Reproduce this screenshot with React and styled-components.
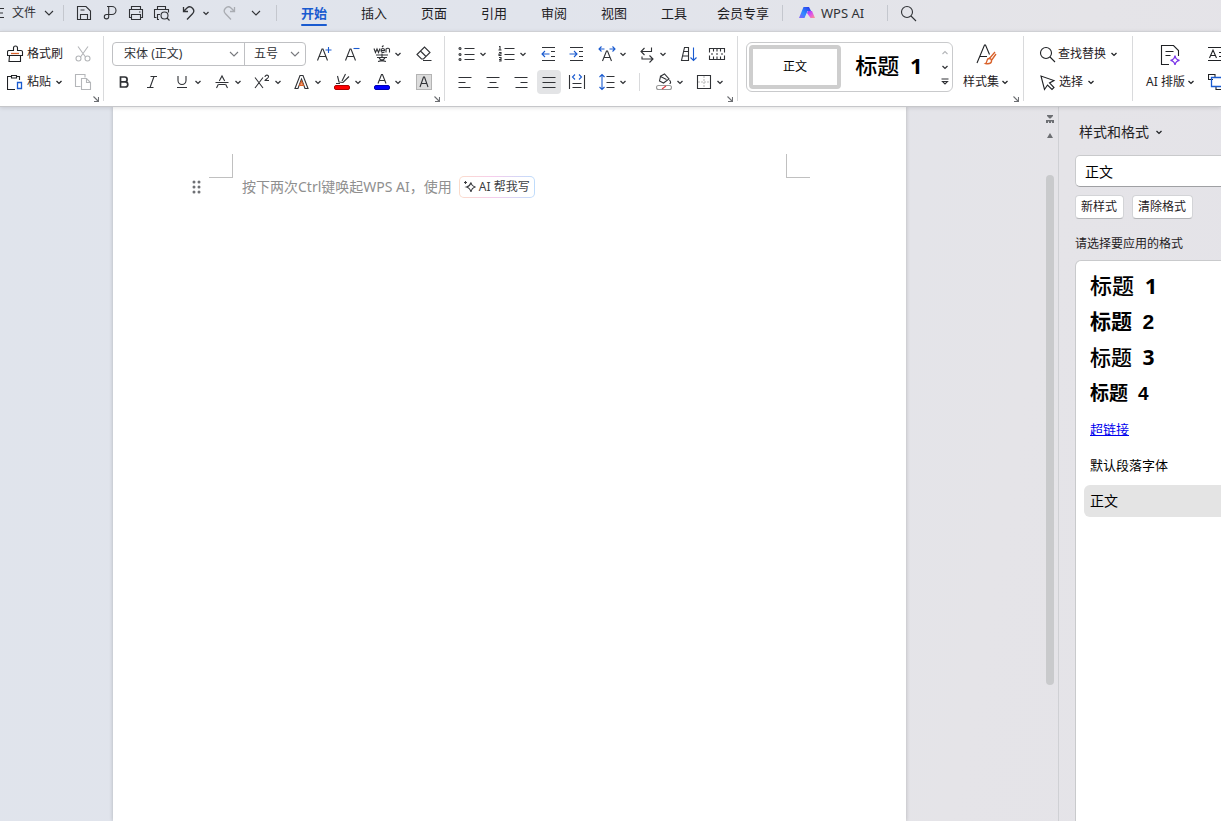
import React, { useState } from 'react';
import styled, { createGlobalStyle, css } from 'styled-components';

const ink = '#303236';
const blue = '#1a5bd0';
const line = '#c9cacc';
const uiFont = '"Noto Sans", "Noto Sans CJK SC", sans-serif';

const GlobalStyle = createGlobalStyle`
    * {
        box-sizing: border-box;
    }

    body {
        margin: 0;
        font-family: ${uiFont};
        font-size: 12px;
        line-height: 20px;
        color: #1f2124;
        overflow: hidden;
    }

    button, select, input {
        font: inherit;
        color: inherit;
        margin: 0;
        padding: 0;
        border: none;
        border-radius: 0;
        background: none;
    }

    svg {
        display: block;
        flex: none;
        fill: none;
        stroke: currentColor;
        stroke-width: 1.1;
    }
`;

const Window = styled.div`
    display: flex;
    flex-direction: column;
    height: 100vh;
    overflow: hidden;
    background: linear-gradient(100deg, #e0e4ec, #e1e4ec 40%, #e5e4e8 80%, #e4e3e8);
`;

/* ---- top bar ---- */

const TopBar = styled.header`
    display: flex;
    align-items: center;
    flex: none;
    padding-bottom: 5px;
    color: ${ink};
    white-space: nowrap;
`;

const FileButton = styled.button`
    display: flex;
    align-items: center;
    gap: 8px;
    height: 26px;
    margin-right: 2px;
`;

const QuickButton = styled.button`
    display: flex;
    align-items: center;
    justify-content: center;
    width: ${({ $narrow }) => $narrow ? '10px' : '26px'};
    margin-right: ${({ $narrow }) => $narrow ? '6px' : '0'};
    height: 26px;
    color: ${({ $muted }) => $muted ? '#a9acb2' : ink};
`;

const Divider = styled.span`
    flex: none;
    width: 1px;
    height: 16px;
    margin: ${({ $afterTabs }) => $afterTabs ? '0 16px 0 0' : '0 7px'};
    background: #c4c7ce;
`;

const Tab = styled.button`
    position: relative;
    min-width: 60px;
    height: 26px;
    padding: 0 13px;
    font-size: 13px;
    color: #1f2124;

    ${({ $active }) => $active && css`
        font-weight: 700;
        color: ${blue};

        &:after {
            content: '';
            position: absolute;
            left: 17px;
            right: 17px;
            bottom: 0;
            height: 2px;
            border-radius: 1px;
            background: ${blue};
        }
    `}
`;

const AiTab = styled.button`
    display: flex;
    align-items: center;
    gap: 6px;
    height: 26px;
    margin-right: 16px;
    font-size: 13px;
`;

/* ---- ribbon ---- */

const Ribbon = styled.section`
    display: flex;
    flex: none;
    height: 76px;
    padding: 4px 0 5px;
    overflow: hidden;
    background: #fff;
    border-top: 1px solid #cfd0d4;
    border-bottom: 1px solid #c6c7ca;
    white-space: nowrap;
    color: ${ink};
    position: relative;
    box-shadow: 0 1px 4px rgba(0, 0, 0, .12);
`;

const Group = styled.div`
    position: relative;
    display: flex;
    flex: none;
    padding: ${({ $pad }) => $pad || '4px 8px 0'};
    border-right: 1px solid #d9dadc;
`;

const Rows = styled.div`
    display: flex;
    flex-direction: column;
`;

const Row = styled.div`
    display: flex;
    align-items: center;
    justify-content: ${({ $spread }) => $spread ? 'space-between' : 'flex-start'};
    gap: ${({ $gap }) => $gap || '4px'};
    height: 28px;
`;

const Tool = styled.button`
    display: flex;
    align-items: center;
    justify-content: center;
    width: 24px;
    height: 24px;
    border-radius: 4px;
    background: ${({ $pressed }) => $pressed ? '#e3e4e6' : 'none'};
    color: ${({ $muted }) => $muted ? '#b4b6b9' : ink};
`;

const Split = styled.div`
    display: flex;
    align-items: center;
    padding: 0 2px;

    & + ${Tool} {
        margin-left: 4px;
    }
`;

const CaretButton = styled.button`
    display: flex;
    align-items: center;
    justify-content: center;
    width: 8px;
    height: 24px;
`;

const LabelButton = styled.button`
    display: flex;
    align-items: center;
    gap: 2px;
    height: 24px;
    color: #1f2124;

    svg + svg {
        margin-left: 3px;
    }
`;

const Launcher = styled.button`
    position: absolute;
    right: 4px;
    bottom: -1px;
    color: #6d6f73;
`;

const RowDivider = styled.span`
    width: 1px;
    height: 18px;
    margin: 0 6px;
    background: #d9dadc;
`;

const ComboGroup = styled.div`
    display: flex;
    height: 24px;
    margin-right: 2px;
    border: 1px solid #bfc0c3;
    border-radius: 4px;
`;

const ComboCell = styled.label`
    display: grid;
    align-items: center;
    width: ${({ $wide }) => $wide ? '131px' : '61px'};

    & + & {
        border-left: 1px solid #bfc0c3;
    }

    > * {
        grid-area: 1 / 1;
    }

    select {
        appearance: none;
        width: 100%;
        height: 22px;
        padding-left: ${({ $wide }) => $wide ? '11px' : '9px'};
        outline: none;
    }

    svg {
        justify-self: end;
        margin-right: 5px;
        color: #77797d;
        pointer-events: none;
    }
`;

const Gallery = styled.div`
    display: flex;
    gap: 2px;
    height: 50px;
    margin-top: 2px;
    padding: 2px 0 2px 2px;
    border: 1px solid ${line};
    border-radius: 6px;
`;

const Preview = styled.button`
    width: 92px;
    height: 44px;
    border: 4px solid ${({ $active }) => $active ? '#cecece' : 'transparent'};
    border-radius: 4px;
    color: #000;
    white-space: pre;
`;

const Spinner = styled.div`
    display: flex;
    flex-direction: column;
    width: 15px;

    button {
        display: flex;
        flex: 1;
        align-items: center;
        justify-content: center;
    }

    button:first-child {
        color: #b4b6b9;
    }
`;

const BigButton = styled.button`
    display: flex;
    flex-direction: column;
    align-items: center;
    margin-left: ${({ $offset }) => $offset || '0'};
    color: #1f2124;

    > span {
        display: flex;
        align-items: center;
        justify-content: center;
        gap: 3px;
        height: 28px;
    }
`;

/* ---- document ---- */

const Workspace = styled.div`
    display: flex;
    flex: 1;
    min-height: 0;
`;

const Canvas = styled.main`
    display: flex;
    flex: 1;
    min-width: 0;
    padding: 0 139px 0 113px;
`;

const Page = styled.article`
    flex: 1;
    min-width: 0;
    padding-top: 47px;
    background: #fff;
    box-shadow: 0 0 4px rgba(0, 0, 0, .22);
`;

const Corners = styled.div`
    display: flex;
    justify-content: space-between;
    padding: 0 96px;
`;

const Corner = styled.span`
    width: 24px;
    height: 24px;
    border-bottom: 1px solid #c0c0c0;
    border-${({ $side }) => $side}: 1px solid #c0c0c0;
`;

const PromptLine = styled.div`
    display: flex;
    align-items: center;
    height: 22px;
    margin-top: -2px;
    padding-left: 79px;
    white-space: nowrap;
`;

const DragHandle = styled.button`
    margin-right: 41px;
    color: #6f7175;
`;

const Hint = styled.p`
    margin: 0 7px 0 0;
    font-size: 14px;
    color: #8f8f8f;
`;

const WriteButton = styled.button`
    display: flex;
    align-items: center;
    gap: 2px;
    height: 22px;
    padding: 0 4px 0 3px;
    border: 1px solid transparent;
    border-radius: 5px;
    background:
        linear-gradient(#fff, #fff) padding-box,
        linear-gradient(90deg, #fbdccb, #f6cdec 45%, #bfdcfb) border-box;
    color: #3c3e42;
`;

const ScrollRail = styled.div`
    display: flex;
    flex-direction: column;
    align-items: center;
    flex: none;
    width: 13px;
    padding: 8px 4px 0 1px;
    color: #6d6f73;

    svg + svg {
        margin: 10px 0 37px;
    }
`;

const Track = styled.div`
    flex: 1;
    width: 8px;
`;

const Thumb = styled.div`
    height: 79%;
    border-radius: 4px;
    background: #c9cacc;
`;

/* ---- styles pane ---- */

const Pane = styled.aside`
    display: flex;
    flex: 0 0 163px;
    flex-direction: column;
    padding: 15px 0 0 16px;
    border-left: 1px solid #cfd0d4;
    overflow: hidden;
    white-space: nowrap;
`;

const PaneTitle = styled.button`
    display: flex;
    align-items: center;
    gap: 7px;
    height: 20px;
    padding-left: 4px;
    font-size: 14px;
`;

const CurrentStyle = styled.input`
    flex: none;
    width: 280px;
    height: 32px;
    margin-top: 13px;
    padding: 0 9px;
    border: 1px solid ${line};
    border-bottom-color: #9fa0a3;
    border-radius: 5px;
    background: #fff;
    font-size: 14px;
    color: #000;
`;

const PaneButtons = styled.div`
    display: flex;
    gap: 8px;
    margin-top: 8px;
`;

const PaneButton = styled.button`
    height: 24px;
    padding: 0 6px 0 5px;
    border: 1px solid #d3d4d7;
    border-bottom-color: #b4b5b8;
    border-radius: 4px;
    background: #fff;
`;

const PaneLabel = styled.p`
    margin: 15px 0 6px;
    line-height: 20px;
`;

const StyleList = styled.div`
    display: flex;
    flex: 1;
    flex-direction: column;
    gap: 4px;
    width: 280px;
    padding: 8px;
    border: 1px solid ${line};
    border-bottom: none;
    border-radius: 6px 6px 0 0;
    background: #fff;
`;

const StyleItem = styled.button`
    height: 32px;
    padding: 0 6px;
    border-radius: 6px;
    background: ${({ $active }) => $active ? '#e4e4e4' : 'none'};
    font-size: ${({ $size }) => $size};
    font-weight: ${({ $weight }) => $weight || 400};
    color: ${({ $link }) => $link ? '#0000ee' : '#000'};
    text-decoration: ${({ $link }) => $link ? 'underline' : 'none'};
    text-align: left;
    white-space: pre;
`;

const Level = styled.span`
    margin-left: 5px;
    font-family: ${({ $sans }) => $sans ? '"Liberation Sans"' : '"Open Sans"'}, sans-serif;
    font-weight: 700;
`;

const HeadingSample = styled.span`
    font-size: 22px;
    font-weight: 500;
`;

const Svg = ({ w = 18, h = 18, children }) => (
    <svg width={w} height={h} viewBox={`0 0 ${w} ${h}`} aria-hidden='true'>{children}</svg>
);

const Caret = () => <Svg w={6} h={5}><path d='M.5 1L3 3.4 5.5 1' strokeWidth='1.3' /></Svg>;
const Chevron = () => <Svg w={10} h={6}><path d='M1 1l4 4 4-4' /></Svg>;
const LaunchIcon = () => <Svg w={6} h={6}><path d='M.5.5L5 5M5.5 1v4.5H1' /></Svg>;

const icons = {
    menu: <Svg w={4} h={12}><path d='M0 1.5h4M0 6h3M0 10.5h4' /></Svg>,
    save: <Svg><path d='M2.5 2.5H11l4.5 4.5v8.5h-13zM5.5 15.5v-5h7v5M5.5 6h4' /></Svg>,
    pdf: <Svg><path d='M6 2.5h5a4 4 0 010 8H5.5a2.2 2.2 0 102.2 2.3V2.5' /></Svg>,
    print: <Svg><path d='M4.5 5.5v-3h9v3M4.5 13.5h-2v-8h13v8h-2M4.5 10.5h9v5h-9zM12 8h1.5' /></Svg>,
    preview: <Svg><path d='M4.5 5.5v-3h8v3M6 15.5H4.5v-5H7M3.5 13.5h-2v-8h14v3' /><circle cx='11.5' cy='11.5' r='3.5' /><path d='M14 14l2.5 2.5' /></Svg>,
    undo: <Svg><path d='M4.5 3v4.5H9M4.7 7.3L8 4a4 4 0 015.5 5.8L8 15.5' strokeWidth='1.3' /></Svg>,
    redo: <Svg><path d='M13.5 3v4.5H9M13.3 7.3L10 4a4 4 0 00-5.5 5.8L10 15.5' strokeWidth='1.3' /></Svg>,
    search: <Svg w={17} h={17}><circle cx='7' cy='7' r='5.5' /><path d='M11 11l5 5' /></Svg>,
    brush: <Svg><path d='M6.5 5.5V3a1.5 1.5 0 014 0v2.5H14A1.5 1.5 0 0115.5 7v3.5H.5V7A1.5 1.5 0 012 5.5zM2.5 10.5l-.5 6h11.5v-6' /><path d='M4 8.5h8' stroke='#d9622b' strokeWidth='1.3' /></Svg>,
    paste: <Svg><path d='M4 3.5H.5v13H8M10 3.5h2.5V7' /><path d='M4.5 2.5h5V5h-5z' /><path d='M10.5 9.5h4v6h-4z' stroke={blue} strokeWidth='1.3' /></Svg>,
    cut: <Svg><path d='M4 1.5L11.5 12M14 1.5L6.5 12' /><circle cx='4.5' cy='13.5' r='2.5' /><circle cx='13.5' cy='13.5' r='2.5' /></Svg>,
    copy: <Svg><path d='M6.5 13.5h-5v-12H11v3M7.5 5.5h5l4 4v7h-9zM12.5 5.5v4h4' /></Svg>,
    grow: <Svg><path d='M2.5 15.5L7 4h1l4.5 11.5M4 11.5h7' /><path d='M13.5 2v6M10.5 5h6' stroke={blue} /></Svg>,
    shrink: <Svg><path d='M2.5 15.5L7 4h1l4.5 11.5M4 11.5h7' /><path d='M10.5 3.5h6' stroke={blue} /></Svg>,
    pinyin: <Svg><path d='M1 3.5l1.5 4L4 4l1.5 3.5L7 3.5M8 5.5h3.5c0-3-3.5-2.5-3.5 0s3 2 3.5 1.2M13 7.5V4c1-1.2 3.5-1 3.5.5v3M9 2L10.5.5M3 10h12M4 12.5h10M9 8.5v4M6 12.5c1 3 4 3.5 7 4M12 12.5c-1 3-4 3.5-7 4' /></Svg>,
    eraser: <Svg><path d='M2 9.5L9.500 2 15 7.500 8.500 14h-2zM5.500 6l5.500 5.500M8 15.500h8.500' /></Svg>,
    bold: <Svg><path d='M5.5 4h4.2a2.4 2.4 0 010 4.8H5.500zM5.5 8.8h4.700a2.6 2.6 0 010 5.2H5.500z' strokeWidth='1.7' /></Svg>,
    italic: <Svg><path d='M7.5 3.5H14M4 14.5h6.5M11 3.5l-4 11' /></Svg>,
    underline: <Svg><path d='M5 3v4.5a4 4 0 008 0V3M4 14.5h10' /></Svg>,
    strike: <Svg><path d='M6.3 8L9 3l2.700 5M2.5 9.5h13M5.5 11l-2 4M12.5 11l2 4M6 11.5h6' /></Svg>,
    sup: <Svg><path d='M2 4.5L10 15M10 4.5L2 15M12 4c0-2.5 4-2.5 3.5 0-.2 1-3.5 3-3.5 3.5h4' /></Svg>,
    outline: <Svg><path d='M2 15.5l5-13h3l5 13h-3L8.5 6 5 15.5z' /><path d='M6.5 12.5l2-4.5 2 4.5z' fill='#f0a077' stroke='#d9622b' /></Svg>,
    marker: <Svg><path d='M4.5 3L6 9l4 .5 6-6M9 8l3.5-7M3 10.5h4' /><rect x='1.5' y='12.5' width='15' height='4' rx='1.5' fill='#f00' stroke='#b00000' strokeWidth='1' /></Svg>,
    fontColor: <Svg><path d='M5 10.5l3.5-9h1l3.5 9M6.5 7.5h5' /><rect x='1.5' y='12.5' width='15' height='4' rx='1.5' fill='#00f' stroke='#0000b0' strokeWidth='1' /></Svg>,
    shade: <Svg><rect x='1.5' y='1.5' width='15' height='15' fill='#dcdcdc' stroke='#b4b4b4' strokeWidth='1' /><path d='M5 14L8.5 4h1L13 14M6.5 10.5h5' /></Svg>,
    bullets: <Svg><path d='M6.5 3.5h10M6.5 9.5h10M6.5 14.5h10' /><circle cx='2' cy='3.5' r='1' /><circle cx='2' cy='9.5' r='1' /><circle cx='2' cy='14.5' r='1' /></Svg>,
    numbers: <Svg><path d='M6.5 3.5h10M6.5 9.5h10M6.5 14.5h10M1 1.5h1V5M.5 5h3M1 7.5h2V9H1v1.5h2.5M1 12.5h2V16H1M1 14.500h2' /></Svg>,
    outdent: <Svg><path d='M2 2.5h13M11 6.5h4M11 11.5h4M2 15.5h13' /><path d='M9.5 9H2M5 6L2 9l3 3' stroke={blue} /></Svg>,
    indent: <Svg><path d='M2 2.5h13M11 6.5h4M11 11.5h4M2 15.5h13' /><path d='M1.5 9H9M6 6l3 3-3 3' stroke={blue} /></Svg>,
    textScale: <Svg><path d='M4.5 16l4-10h1l4 10M6 12.5h6' /><path d='M1 4h5.5M3.5 1.5L1 4l2.5 2.5M17 4h-5.5M14.5 1.5L17 4l-2.5 2.5' stroke={blue} /></Svg>,
    direction: <Svg><path d='M13.5 2.5v4H3M6.5 3L3 6.5 6.5 10M4 11.5V14h10.5M11.5 10.5L15 14l-3.500 3.5' /></Svg>,
    sort: <Svg><path d='M4.5 2.5h4v13h-7zM3.5 6.5h5M2.5 11h6' /><path d='M13.5 2.5v13M10.5 12.5l3 3 3-3' stroke={blue} /></Svg>,
    tabs: <Svg><path d='M1.5 7.5v-4h15v4M1.5 10.5v4h15v-4M5.5 3.5v3M9 3.5v3M12.5 3.5v3M5.5 14.5v-3M9 14.5v-3M12.5 14.5v-3M3 9h2M8 9h2M13 9h2' /></Svg>,
    left: <Svg><path d='M2.5 4.5h13M2.5 9.5h7M2.5 14.5h12' /></Svg>,
    center: <Svg><path d='M2.5 4.5h13M5.5 9.5h7M3.5 14.5h11' /></Svg>,
    right: <Svg><path d='M2.5 4.5h13M8.5 9.5h7M3.5 14.5h12' /></Svg>,
    justify: <Svg><path d='M2.5 4.5h13M2.5 9.5h13M2.5 14.5h13' /></Svg>,
    distribute: <Svg><path d='M1.5 2v14M16.5 2v14M4.5 10.5h9M4.5 14.5h9' /><path d='M7 1.5L4.5 4 7 6.5M11 1.5L13.5 4 11 6.5' stroke={blue} /></Svg>,
    spacing: <Svg><path d='M8.5 3.5h8M8.5 9.5h8M8.5 14.5h8' /><path d='M4 1.5v15M1.5 4L4 1.5 6.5 4M1.5 14L4 16.5 6.5 14' stroke={blue} /></Svg>,
    fill: <Svg><path d='M5 3.5L9.5 1 14 6l-5.5 4-4-2 1-4.5 6 3M14.500 7c1.5 2 1.5 3.500 0 3.500' /><rect x='1.5' y='12.5' width='15' height='4' rx='2' stroke='#999' /><path d='M7 16l4-3' stroke='#e0393e' /></Svg>,
    border: <Svg><path d='M9 3v12M3 9h12' stroke='#bbb' strokeDasharray='2 1' /><path d='M2.5 2.5h13v13h-13z' /></Svg>,
    styleSet: <Svg w={22} h={24}><path d='M2 21L9.5 3h1l4 9.5M5 14.5h7' /><path d='M20 10l-6 7M21 12l-5 7M14 16.5c2 0 3 1.5 2.5 3-.5 2-3.5 2.5-6 2 1.5-.8 1-1.5 1.5-3 .3-1 1-2 2-2z' stroke='#d9622b' strokeWidth='1.3' /></Svg>,
    pointer: <Svg><path d='M2 3l3.5 13.5 3-4.5 4.5 4.5 2-2-4.5-4.5L15 7.5z' /></Svg>,
    layout: <Svg w={22} h={24}><path d='M10 22.5H2.5v-19h12l5 5V14M6.5 9.5h8M6.5 13.5h5' /><path d='M16 13.5c.5 3.300 1.5 4.300 4.500 4.800-3 .5-4 1.5-4.500 4.700-.5-3.200-1.500-4.200-4.500-4.700 3-.5 4-1.500 4.500-4.800z' stroke='#7a35e8' strokeWidth='1.3' /></Svg>,
    textBox: <Svg w={22}><path d='M0 2.5h22M0 15.5h22M1.5 13L5 5l3.5 8M3 10.5h4M11 7.5h8M11 11.5h8' /></Svg>,
    arrange: <Svg w={22}><path d='M5 6.5H.5v-5H7v3M8 14v2.5h8' /><path d='M3.5 4.5h17v9h-17z' stroke={blue} strokeWidth='1.3' /></Svg>,
    sparkle: <Svg w={14} h={14}><path d='M8 2.5c.5 2.7 1.5 4 4.5 4.5-3 .7-4 2-4.5 5-.7-3-2-4.3-4.5-5C6.3 6.3 7.3 5 8 2.5zM2.5 1v3M1 2.5h3' /></Svg>,
};

const SplitTool = ({ icon, label }) => (
    <Split>
        <Tool aria-label={label}>{icons[icon]}</Tool>
        <CaretButton aria-label={`${label}选项`}><Caret /></CaretButton>
    </Split>
);

const AiLogo = () => (
    <svg width='16' height='14' viewBox='0 0 16 14' aria-hidden='true'>
        <defs>
            <linearGradient id='aiLeft' x1='0' y1='1' x2='1' y2='0'>
                <stop offset='0' stopColor='#8a5cff' />
                <stop offset='.4' stopColor='#2f8bff' />
                <stop offset='1' stopColor='#2a2fe8' />
            </linearGradient>
            <linearGradient id='aiRight' x1='0' y1='0' x2='1' y2='1'>
                <stop offset='0' stopColor='#8a3cff' />
                <stop offset='.5' stopColor='#e055e8' />
                <stop offset='1' stopColor='#ff9a80' />
            </linearGradient>
        </defs>
        <path d='M9 5h4l3 7h-4.5L8 7z' fill='url(#aiRight)' stroke='none' />
        <path d='M4.5 1H10l2 4H8.5l-3 7H0z' fill='url(#aiLeft)' stroke='none' />
    </svg>
);

const tabs = ['开始', '插入', '页面', '引用', '审阅', '视图', '工具', '会员专享'];

const headings = [
    { level: 1, size: '22px', weight: 500 },
    { level: 2, size: '21px', weight: 700, sans: true },
    { level: 3, size: '21px', weight: 500 },
    { level: 4, size: '19px', weight: 700, sans: true },
];

const App = () => {
    const [tab, setTab] = useState('开始');
    const [current, setCurrent] = useState('正文');

    return (
        <Window>
            <GlobalStyle />
            <TopBar>
                <FileButton>{icons.menu}文件<Chevron /></FileButton>
                <Divider />
                <QuickButton aria-label='保存'>{icons.save}</QuickButton>
                <QuickButton aria-label='输出为PDF'>{icons.pdf}</QuickButton>
                <QuickButton aria-label='打印'>{icons.print}</QuickButton>
                <QuickButton aria-label='打印预览'>{icons.preview}</QuickButton>
                <QuickButton aria-label='撤销'>{icons.undo}</QuickButton>
                <QuickButton aria-label='撤销历史' $narrow><Caret /></QuickButton>
                <QuickButton aria-label='恢复' $muted>{icons.redo}</QuickButton>
                <QuickButton aria-label='自定义快速访问'><Chevron /></QuickButton>
                <Divider />
                {tabs.map(name => (
                    <Tab key={name} $active={name === tab} onClick={() => setTab(name)}>{name}</Tab>
                ))}
                <Divider $afterTabs />
                <AiTab><AiLogo />WPS AI</AiTab>
                <Divider />
                <QuickButton aria-label='搜索'>{icons.search}</QuickButton>
            </TopBar>

            <Ribbon>
                <Group $pad='4px 8px 0 7px'>
                    <Rows>
                        <Row $spread $gap='8px'>
                            <LabelButton>{icons.brush}格式刷</LabelButton>
                            <Tool aria-label='剪切' $muted>{icons.cut}</Tool>
                        </Row>
                        <Row $spread $gap='8px'>
                            <LabelButton>{icons.paste}粘贴<Caret /></LabelButton>
                            <Tool aria-label='复制' $muted>{icons.copy}</Tool>
                        </Row>
                    </Rows>
                    <Launcher aria-label='剪贴板'><LaunchIcon /></Launcher>
                </Group>

                <Group>
                    <Rows>
                        <Row>
                            <ComboGroup>
                                <ComboCell $wide>
                                    <select aria-label='字体'><option>宋体 (正文)</option></select>
                                    <Chevron />
                                </ComboCell>
                                <ComboCell>
                                    <select aria-label='字号'><option>五号</option></select>
                                    <Chevron />
                                </ComboCell>
                            </ComboGroup>
                            <Tool aria-label='增大字号'>{icons.grow}</Tool>
                            <Tool aria-label='减小字号'>{icons.shrink}</Tool>
                            <SplitTool icon='pinyin' label='拼音指南' />
                            <Tool aria-label='清除格式'>{icons.eraser}</Tool>
                        </Row>
                        <Row>
                            <Tool aria-label='加粗'>{icons.bold}</Tool>
                            <Tool aria-label='倾斜'>{icons.italic}</Tool>
                            <SplitTool icon='underline' label='下划线' />
                            <SplitTool icon='strike' label='删除线' />
                            <SplitTool icon='sup' label='上标' />
                            <SplitTool icon='outline' label='文字效果' />
                            <SplitTool icon='marker' label='突出显示' />
                            <SplitTool icon='fontColor' label='字体颜色' />
                            <Tool aria-label='字符底纹'>{icons.shade}</Tool>
                        </Row>
                    </Rows>
                    <Launcher aria-label='字体设置'><LaunchIcon /></Launcher>
                </Group>

                <Group>
                    <Rows>
                        <Row>
                            <SplitTool icon='bullets' label='项目符号' />
                            <SplitTool icon='numbers' label='编号' />
                            <Tool aria-label='减少缩进'>{icons.outdent}</Tool>
                            <Tool aria-label='增加缩进'>{icons.indent}</Tool>
                            <SplitTool icon='textScale' label='中文版式' />
                            <SplitTool icon='direction' label='文字方向' />
                            <Tool aria-label='排序'>{icons.sort}</Tool>
                            <Tool aria-label='制表位'>{icons.tabs}</Tool>
                        </Row>
                        <Row>
                            <Tool aria-label='左对齐'>{icons.left}</Tool>
                            <Tool aria-label='居中'>{icons.center}</Tool>
                            <Tool aria-label='右对齐'>{icons.right}</Tool>
                            <Tool aria-label='两端对齐' $pressed>{icons.justify}</Tool>
                            <Tool aria-label='分散对齐'>{icons.distribute}</Tool>
                            <SplitTool icon='spacing' label='行距' />
                            <RowDivider />
                            <SplitTool icon='fill' label='底纹颜色' />
                            <SplitTool icon='border' label='边框' />
                        </Row>
                    </Rows>
                    <Launcher aria-label='段落设置'><LaunchIcon /></Launcher>
                </Group>

                <Group $pad='4px 15px 0 8px'>
                    <Gallery>
                        <Preview $active>正文</Preview>
                        <Preview>
                            <HeadingSample>标题 <Level>1</Level></HeadingSample>
                        </Preview>
                        <Spinner>
                            <button aria-label='向上'><Svg w={6} h={5}><path d='M.5 4L3 1.5 5.5 4' /></Svg></button>
                            <button aria-label='向下'><Caret /></button>
                            <button aria-label='更多样式'><Svg w={8} h={7}><path d='M.5 1h7M1.5 3.5h5L4 6z' /></Svg></button>
                        </Spinner>
                    </Gallery>
                    <BigButton $offset='10px'>
                        <span>{icons.styleSet}</span>
                        <span>样式集<Caret /></span>
                    </BigButton>
                    <Launcher aria-label='样式设置'><LaunchIcon /></Launcher>
                </Group>

                <Group $pad='4px 15px 0'>
                    <Rows>
                        <Row><LabelButton>{icons.search}查找替换<Caret /></LabelButton></Row>
                        <Row><LabelButton>{icons.pointer}选择<Caret /></LabelButton></Row>
                    </Rows>
                </Group>

                <Group $pad='4px 8px 0 13px'>
                    <BigButton>
                        <span>{icons.layout}</span>
                        <span>AI 排版<Caret /></span>
                    </BigButton>
                    <BigButton $offset='14px'>
                        <span>{icons.textBox}</span>
                        <span>{icons.arrange}</span>
                    </BigButton>
                </Group>
            </Ribbon>

            <Workspace>
                <Canvas>
                    <Page>
                        <Corners>
                            <Corner $side='right' />
                            <Corner $side='left' />
                        </Corners>
                        <PromptLine>
                            <DragHandle aria-label='拖动段落'>
                                <svg width='9' height='14' viewBox='0 0 9 14'>
                                    <g fill='currentColor' stroke='none'>
                                        {[2, 7, 12].map(y => [2, 7].map(x => (
                                            <circle key={`${x}-${y}`} cx={x} cy={y} r='1.5' />
                                        )))}
                                    </g>
                                </svg>
                            </DragHandle>
                            <Hint>按下两次Ctrl键唤起WPS AI，使用</Hint>
                            <WriteButton>{icons.sparkle}AI 帮我写</WriteButton>
                        </PromptLine>
                    </Page>
                </Canvas>
                <ScrollRail>
                    <Svg w={8} h={8}><path d='M1 0h6v1L4.5 3.5h-1L1 1zM0 5h8v3H6V6.5H5V8H3V6.5H2V8H0z' fill='currentColor' stroke='none' /></Svg>
                    <Svg w={6} h={5}><path d='M3 0l3 5H0z' fill='currentColor' stroke='none' /></Svg>
                    <Track><Thumb /></Track>
                </ScrollRail>
                <Pane>
                    <PaneTitle>样式和格式<Caret /></PaneTitle>
                    <CurrentStyle aria-label='当前样式' value={current} readOnly />
                    <PaneButtons>
                        <PaneButton>新样式</PaneButton>
                        <PaneButton>清除格式</PaneButton>
                    </PaneButtons>
                    <PaneLabel>请选择要应用的格式</PaneLabel>
                    <StyleList>
                        {headings.map(({ level, size, weight, sans }) => (
                            <StyleItem key={level} $size={size} $weight={weight} onClick={() => setCurrent(`标题 ${level}`)}>
                                标题 <Level $sans={sans}>{level}</Level>
                            </StyleItem>
                        ))}
                        <StyleItem $size='13px' $link>超链接</StyleItem>
                        <StyleItem $size='13px'>默认段落字体</StyleItem>
                        <StyleItem $size='14px' $active onClick={() => setCurrent('正文')}>正文</StyleItem>
                    </StyleList>
                </Pane>
            </Workspace>
        </Window>
    );
}

export default App;
